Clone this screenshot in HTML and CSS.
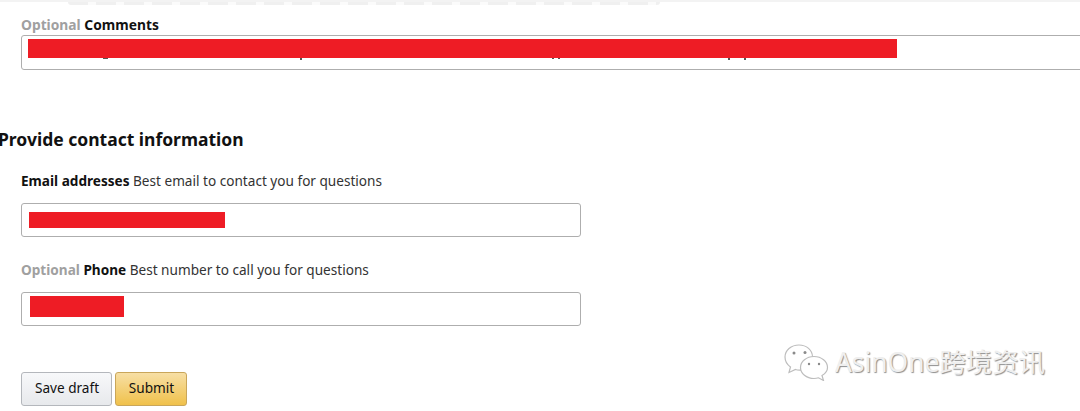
FILE: index.html
```html
<!DOCTYPE html>
<html lang="en">
<head>
    <meta charset="UTF-8">
    <meta name="viewport" content="width=device-width, initial-scale=1.0">
    <title>Provide contact information</title>
    <link rel="stylesheet" href="styles.css">
</head>

<body>
    <!-- bottom of the block cut off by the top edge -->
    <div class="top-line"></div>
    <div class="top-dashes"></div>

    <form class="form">
        <div class="comments">
            <div class="label label-comments"><span class="optional">Optional</span> <strong>Comments</strong></div>
            <div class="field field-wide">
                <span class="redact redact-comments"></span>
                <span class="descenders"></span>
            </div>
        </div>

        <h2 class="section-title">Provide contact information</h2>

        <div class="label"><strong>Email addresses</strong> Best email to contact you for questions</div>
        <div class="field field-email">
            <span class="redact redact-email"></span>
        </div>

        <div class="label label-phone"><span class="optional">Optional</span> <strong>Phone</strong> Best number to call you for questions</div>
        <div class="field field-phone">
            <span class="redact redact-phone"></span>
        </div>

        <div class="buttons">
            <button type="button" class="btn btn-draft">Save draft</button>
            <button type="button" class="btn btn-submit">Submit</button>
        </div>
    </form>

    <!-- watermark -->
    <div class="watermark">
        <svg class="wechat" width="46" height="38" viewBox="0 0 46 38" stroke="#bdbdbd" stroke-width="1.2" fill="#fff">
            <path d="M16 2C8 2 2 7.500 2 14c0 4 2 7.500 5.500 10L6 29.500l6.500-3c1.500.5 2.500.6 4 .7 6 .2 13-5 13-13.200C29.500 7 23.500 2 16 2z"/>
            <path d="M31 13.500c-7.500 0-13.500 5-13.500 11s6 11 13.500 11c2 0 3-.2 4.500-.7l5 2.700-1.500-5c3.500-2 5.500-4.800 5.500-8 0-6-6-11-13.500-11z"/>
            <g fill="#8a8a8a" stroke="none">
                <circle cx="11" cy="10" r="1.500"/>
                <circle cx="22" cy="9.500" r="1.500"/>
                <circle cx="26" cy="21" r="1.200"/>
                <circle cx="36" cy="21" r="1.200"/>
            </g>
        </svg>
        <span class="watermark-text">AsinOne跨境资讯</span>
    </div>
</body>
</html>
```
FILE: styles.css
```css
html, body {
    margin: 0;
    height: 411px;
    overflow: hidden;
}
body {
    font-family: "Noto Sans", Arial, sans-serif;
    font-size: 13.6px;
    color: #111;
    background: #fff;
    position: relative;
}

/* strip at the very top */
.top-line {
    height: 2px;
    background: #f3f3f3;
}
.top-dashes {
    height: 3px;
    margin-left: 68px;
    width: 592px;
    background: repeating-linear-gradient(to right, #f0f0f0 0, #f0f0f0 20px, #fbfbfb 20px, #fbfbfb 28px);
    border-radius: 0 0 4px 4px;
}

.form {
    padding-left: 21px;
}

.label {
    font-size: 13.6px;
    line-height: 18px;
    color: #333;
}
.label strong {
    color: #111;
}
.label-comments {
    font-size: 13.8px;
}
.label-phone {
    margin-top: 24px;
}
.optional {
    color: #a0a0a0;
    font-weight: bold;
}

.comments {
    padding-top: 11px;
}

.field {
    box-sizing: border-box;
    width: 560px;
    height: 34px;
    padding: 4px 7px;
    border: 1px solid #aeaeae;
    border-radius: 3px;
    background: #fff;
}
.field-wide {
    width: 1100px;
    height: 35px;
    margin-top: 1px;
    padding: 3px 6px;
}
.field-email {
    margin-top: 13px;
}
.field-phone {
    margin-top: 13px;
}

.redact {
    display: block;
    background: #ee1c25;
}
.redact-comments {
    width: 869px;
    height: 19px;
}
.redact-email {
    width: 196px;
    height: 16px;
    margin-top: 4px;
}
.redact-phone {
    width: 94px;
    height: 21px;
    margin: -1px 0 0 1px;
}

/* bits of text sticking out below the red bar */
.descenders {
    display: block;
    width: 740px;
    height: 2px;
    background:
        linear-gradient(#555, #555) 75px 0 / 5px 1px no-repeat,
        linear-gradient(#555, #555) 272px 0 / 2px 2px no-repeat,
        linear-gradient(#555, #555) 524px 0 / 2px 1px no-repeat,
        linear-gradient(#555, #555) 530px 0 / 2px 1px no-repeat,
        linear-gradient(#555, #555) 700px 0 / 2px 2px no-repeat,
        linear-gradient(#555, #555) 716px 0 / 2px 2px no-repeat;
}

.section-title {
    margin: 57px 0 0 -23px;
    font-size: 17.5px;
    line-height: 24px;
    font-weight: bold;
    color: #111;
    padding-bottom: 21px;
}

.buttons {
    display: flex;
    gap: 3px;
    margin-top: 46px;
}
.btn {
    height: 34px;
    padding: 0 0 3px 1px;
    font-family: "Noto Sans", Arial, sans-serif;
    font-size: 13.6px;
    color: #111;
    border-radius: 3px;
    border: 1px solid #b4b7bc;
}
.btn-draft {
    width: 91px;
    background: linear-gradient(to bottom, #f7f8fa, #e7e9ec);
}
.btn-submit {
    width: 72px;
    border-color: #c9a65a;
    background: linear-gradient(to bottom, #f7dfa5, #f0c14b);
}

.watermark {
    position: absolute;
    left: 783px;
    top: 343px;
    display: flex;
    align-items: center;
    gap: 6px;
}
.watermark-text {
    font-family: "Noto Sans", "Noto Sans CJK SC", sans-serif;
    font-size: 26.4px;
    line-height: 38px;
    color: #efefef;
    text-shadow: 1px 1px 1px #8f8f8f;
}
```
